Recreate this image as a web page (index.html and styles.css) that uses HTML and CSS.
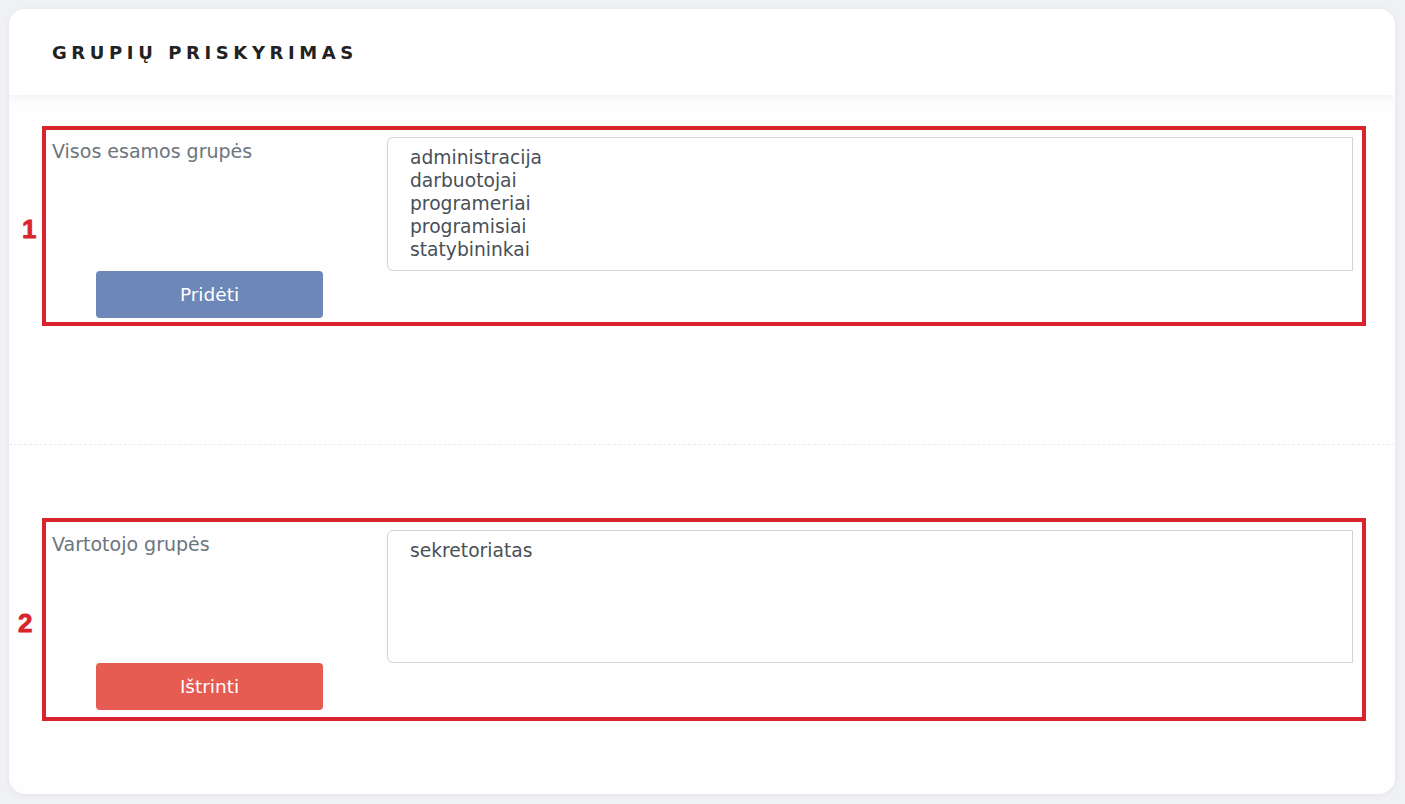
FILE: index.html
```html
<!DOCTYPE html>
<html lang="lt">
<head>
<meta charset="utf-8">
<title>Grupių priskyrimas</title>
<link rel="stylesheet" href="styles.css">
</head>
<body>
<div class="card">
  <div class="card-header">
    <h1 class="title">GRUPIŲ PRISKYRIMAS</h1>
  </div>
  <div class="card-body">
    <div class="section section-top">
      <span class="marker">1</span>
      <div class="box">
        <div class="label">Visos esamos grupės</div>
        <div class="list">
          <div class="opt">administracija</div>
          <div class="opt">darbuotojai</div>
          <div class="opt">programeriai</div>
          <div class="opt">programisiai</div>
          <div class="opt">statybininkai</div>
        </div>
        <div class="btn-cell"><button class="btn btn-add">Pridėti</button></div>
      </div>
    </div>
    <div class="divider"></div>
    <div class="section section-bottom">
      <span class="marker">2</span>
      <div class="box">
        <div class="label">Vartotojo grupės</div>
        <div class="list">
          <div class="opt">sekretoriatas</div>
        </div>
        <div class="btn-cell"><button class="btn btn-del">Ištrinti</button></div>
      </div>
    </div>
  </div>
</div>
</body>
</html>
```
FILE: styles.css
```css
* {
  box-sizing: border-box;
}
html, body {
  margin: 0;
  padding: 0;
  background: #f0f1f4;
  font-family: "DejaVu Sans", sans-serif;
}
body {
  padding: 9px 10px 10px 9px;
}
.card {
  background: #fefefe;
  border-radius: 16px;
  box-shadow: 0 1px 6px rgba(0,0,0,0.06);
  overflow: hidden;
  height: 785px;
}
.card-header {
  background: #ffffff;
  height: 86px;
  box-shadow: 0 3px 10px rgba(0,0,0,0.06);
  position: relative;
  display: flex;
  align-items: center;
  padding-left: 43px;
}
.title {
  margin: 0;
  font-size: 18px;
  font-weight: bold;
  letter-spacing: 4.6px;
  color: #222;
  padding-top: 1px;
}
.card-body {
  display: flex;
  flex-direction: column;
}
.section {
  display: flex;
  align-items: center;
  position: relative;
  padding-left: 33px;
  padding-right: 29px;
}
.section-top {
  margin-top: 31px;
}
.section-bottom {
  margin-top: 73px;
}
.marker {
  position: absolute;
  color: #d9232e;
  font-family: "Liberation Sans", Arial, sans-serif;
  font-weight: 900;
  font-size: 26px;
  -webkit-text-stroke: 0.8px #d9232e;
}
.section-top .marker { left: 13px; top: 88px; }
.section-bottom .marker { left: 9px; top: 90px; }
.box {
  flex: 1;
  border: 4px solid #d9232e;
  display: grid;
  grid-template-columns: 321px 1fr;
  grid-template-rows: auto auto;
  column-gap: 14px;
  padding: 7px 9px 4px 6px;
}
.section-bottom .box {
  padding: 8px 9px 7px 6px;
}
.label {
  color: #6c757d;
  font-size: 19px;
  line-height: 24px;
  padding-top: 2px;
}
.list {
  border: 1px solid #cfd2d6;
  border-radius: 6px 0 0 6px;
  height: 134px;
  padding: 8px 22px 6px;
  color: #495057;
  font-size: 18.7px;
  line-height: 23px;
  background: #fff;
}
.section-bottom .list {
  height: 133px;
}
.btn-cell {
  grid-column: 1;
  display: flex;
  justify-content: center;
  padding-right: 6px;
}
.btn {
  width: 227px;
  height: 47px;
  border: none;
  border-radius: 4px;
  color: #fff;
  font-family: "DejaVu Sans", sans-serif;
  font-size: 18.5px;
}
.btn-add { background: #6d87b8; }
.btn-del { background: #e65b52; }
.divider {
  margin-top: 118px;
  border-top: 1px dashed #ececec;
}
```
